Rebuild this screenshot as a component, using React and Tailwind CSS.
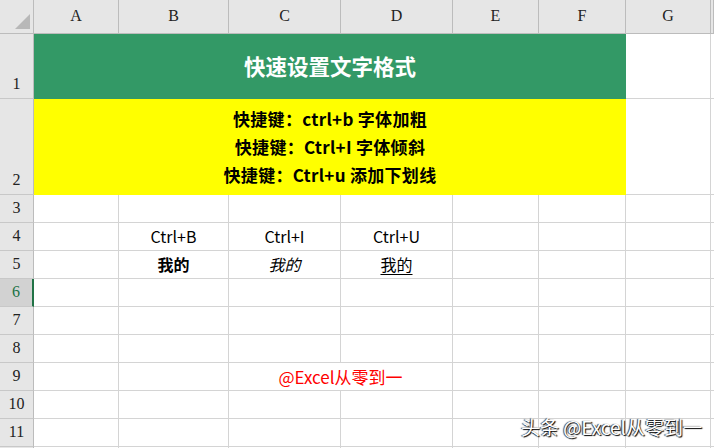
import React from 'react';

const letters = ['A', 'B', 'C', 'D', 'E', 'F', 'G', ''];

const Cell = ({ className = '', children }) => (
    <div className={`border-r border-b border-[#d4d4d4] flex items-end justify-center ${className}`}>
        {children}
    </div>
);

const RowHead = ({ n, active }) => (
    <div
        className={`flex items-end justify-center pb-[2px] text-[16px] font-['Liberation_Serif',serif] border-b border-[#c8c8c8] ${
            active ? 'bg-[#d2d2d2] text-[#217346] border-r-2 border-r-[#217346]' : 'bg-[#e6e6e6] text-[#222] border-r border-r-[#bcbcbc]'
        }`}
    >
        {n}
    </div>
);

const App = () => {
    const emptyRow = (n, cells = {}, label = n) => (
        <React.Fragment key={n}>
            <RowHead n={label} active={n === 6} />
            {[0, 1, 2, 3, 4, 5, 6, 7].map((i) => (
                <Cell key={i} className={i === 7 ? 'border-r-0' : ''}>
                    {cells[i]}
                </Cell>
            ))}
        </React.Fragment>
    );

    return (
        <div className="w-[714px] h-[448px] overflow-hidden bg-white relative font-['Noto_Sans_CJK_SC','Noto_Sans',sans-serif]">
            <div className="grid grid-cols-[34px_85px_110px_112px_112px_86px_87px_85px_1fr] grid-rows-[34px_65px_96px_repeat(10,28px)]">
                {/* corner */}
                <div className="bg-[#e6e6e6] border-r border-b border-[#bcbcbc] relative">
                    <div className="absolute right-[3px] bottom-[4px] w-0 h-0 border-l-[15px] border-l-transparent border-b-[15px] border-b-[#b8b8b8]" />
                </div>
                {letters.map((l, i) => (
                    <div
                        key={i}
                        className="bg-[#e6e6e6] border-r border-b border-[#bcbcbc] flex items-end justify-center pb-[5px] text-[16px] text-[#222] font-['Liberation_Serif',serif]"
                    >
                        {l}
                    </div>
                ))}

                {/* row 1 */}
                <RowHead n={1} />
                <div className="col-span-6 bg-[#339966] flex items-center justify-center text-white font-bold text-[21.5px]">
                    快速设置文字格式
                </div>
                <Cell />
                <Cell className="border-r-0" />

                {/* row 2 */}
                <RowHead n={2} />
                <div className="col-span-6 bg-[#ffff00] flex flex-col items-center justify-center text-black font-bold text-[17px] leading-[28px] tracking-[0.3px]">
                    <div>快捷键：ctrl+b 字体加粗</div>
                    <div>快捷键：Ctrl+I 字体倾斜</div>
                    <div>快捷键：Ctrl+u 添加下划线</div>
                </div>
                <Cell />
                <Cell className="border-r-0" />

                {emptyRow(3)}
                {emptyRow(4, {
                    1: <span className="text-[16px] text-black pb-[2px]">Ctrl+B</span>,
                    2: <span className="text-[16px] text-black pb-[2px]">Ctrl+I</span>,
                    3: <span className="text-[16px] text-black pb-[2px]">Ctrl+U</span>,
                })}
                {emptyRow(5, {
                    1: <span className="text-[16px] font-bold text-black pb-[2px]">我的</span>,
                    2: <span className="text-[16px] italic text-black pb-[2px]">我的</span>,
                    3: <span className="text-[16px] underline underline-offset-[3px] text-black pb-[2px]">我的</span>,
                })}
                {emptyRow(6)}
                {emptyRow(7)}
                {emptyRow(8)}

                {/* row 9 */}
                <RowHead n={9} />
                <Cell />
                <Cell />
                <Cell className="col-span-2">
                    <span className="text-[17px] text-[#ff0000] pb-[1px]">@Excel从零到一</span>
                </Cell>
                <Cell />
                <Cell />
                <Cell />
                <Cell className="border-r-0" />

                {emptyRow(10)}
                {emptyRow(11)}
                {emptyRow(12, {}, '')}
            </div>

            <div className="absolute right-[12px] bottom-[12px] text-white text-[19px] leading-none whitespace-nowrap [text-shadow:1px_1px_1px_#000,-1px_0_1px_#333]">
                头条 @Excel从零到一
            </div>
        </div>
    );
};

export default App;
